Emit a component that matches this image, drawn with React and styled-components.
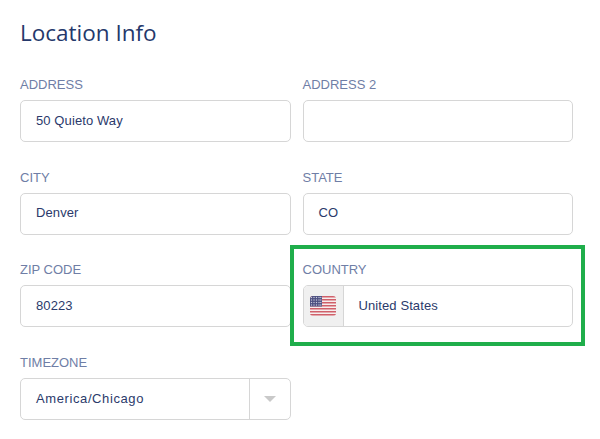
import styled, { createGlobalStyle } from "styled-components";

const GlobalStyle = createGlobalStyle`
  html, body {
    margin: 0;
    background: #fff;
  }
`;

const Page = styled.div`
  width: 600px;
  height: 439px;
  overflow: hidden;
  box-sizing: border-box;
  padding: 17px 27px 0 20px;
  font-family: "Liberation Sans", Arial, sans-serif;
`;

const Title = styled.h2`
  margin: 0 0 28px;
  font-family: "Open Sans", sans-serif;
  font-size: 22.5px;
  line-height: 32px;
  font-weight: 400;
  color: #24386b;
`;

const Grid = styled.div`
  display: grid;
  grid-template-columns: 271px 270.5px;
  column-gap: 11.5px;
  row-gap: 25.7px;
`;

const Field = styled.div`
  position: relative;
  height: 67px;
`;

const Label = styled.label`
  display: block;
  height: 16px;
  margin-bottom: 7px;
  font-size: 13px;
  line-height: 16px;
  color: #6f7ea6;
`;

const Box = styled.div`
  display: flex;
  align-items: center;
  box-sizing: border-box;
  height: 42px;
  border: 1px solid #d6d6d6;
  border-radius: 5px;
  background: #fff;
  overflow: hidden;
`;

const Value = styled.span`
  flex: 1;
  padding-left: 15px;
  padding-bottom: 2px;
  font-size: 13px;
  letter-spacing: ${(p) => p.$spacing || 0.1}px;
  color: #2b3a6b;
`;

const FlagCell = styled.div`
  display: flex;
  align-items: center;
  justify-content: center;
  width: 39px;
  height: 100%;
  background: #f0f0f0;
  border-right: 1px solid #d6d6d6;
`;

const CaretCell = styled.div`
  display: flex;
  align-items: center;
  justify-content: center;
  width: 40px;
  height: 100%;
  border-left: 1px solid #d6d6d6;
`;

const Caret = styled.span`
  width: 0;
  height: 0;
  margin-top: -1px;
  border-left: 6px solid transparent;
  border-right: 6px solid transparent;
  border-top: 6px solid #c9c9c9;
`;

// annotation drawn over the country field
const Highlight = styled.div`
  position: absolute;
  left: -12.5px;
  top: -17.4px;
  width: 295px;
  height: 101px;
  box-sizing: border-box;
  border: 4.5px solid #1fae4b;
  pointer-events: none;
`;

const UsFlag = () => (
  <svg width="26" height="20" viewBox="0 0 26 20">
    <defs>
      <clipPath id="flag-clip">
        <rect width="26" height="20" rx="3" />
      </clipPath>
    </defs>
    <g clipPath="url(#flag-clip)">
      <rect width="26" height="20" fill="#f6eeee" />
      {[0, 3, 6, 9, 12, 15, 18].map((y) => (
        <rect key={y} y={y} width="26" height="1.5" fill="#d0606a" />
      ))}
      <rect width="12" height="10.5" fill="#4b4f80" />
      {[1.5, 4, 6.5, 9].map((y) =>
        [1.5, 4, 6.5, 9, 10.8].map((x) => (
          <rect key={`${x}-${y}`} x={x - 0.6} y={y - 0.6} width="1.2" height="1.2" fill="#c9cbdc" />
        ))
      )}
    </g>
  </svg>
);

const App = () => {
  return (
    <Page>
      <GlobalStyle />
      <Title>Location Info</Title>
      <Grid>
        <Field>
          <Label>ADDRESS</Label>
          <Box>
            <Value>50 Quieto Way</Value>
          </Box>
        </Field>
        <Field>
          <Label>ADDRESS 2</Label>
          <Box />
        </Field>
        <Field>
          <Label>CITY</Label>
          <Box>
            <Value>Denver</Value>
          </Box>
        </Field>
        <Field>
          <Label>STATE</Label>
          <Box>
            <Value>CO</Value>
          </Box>
        </Field>
        <Field>
          <Label>ZIP CODE</Label>
          <Box>
            <Value>80223</Value>
          </Box>
        </Field>
        <Field>
          <Label>COUNTRY</Label>
          <Box>
            <FlagCell>
              <UsFlag />
            </FlagCell>
            <Value>United States</Value>
          </Box>
          <Highlight />
        </Field>
        <Field>
          <Label>TIMEZONE</Label>
          <Box>
            <Value $spacing={0.6}>America/Chicago</Value>
            <CaretCell>
              <Caret />
            </CaretCell>
          </Box>
        </Field>
      </Grid>
    </Page>
  );
};

export default App;
